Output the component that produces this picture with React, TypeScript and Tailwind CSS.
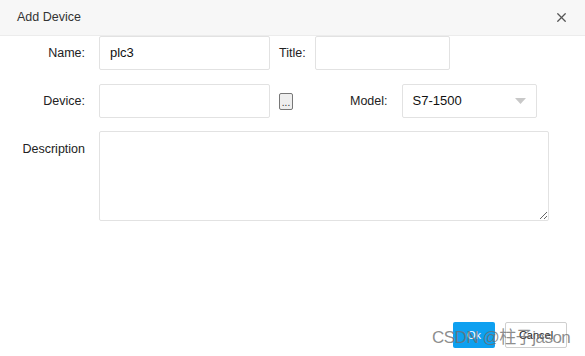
import { X } from 'lucide-react';

const font = { fontFamily: '"Liberation Sans", "Noto Sans CJK SC", Arial, sans-serif' };

function Field({ width, value }: { width: string; value?: string }) {
  return (
    <div className={`${width} h-[34px] border border-[#e2e2e2] rounded-[2px] bg-white flex items-center px-[10px] text-[13px] text-[#111]`}>
      {value}
    </div>
  );
}

export default function App() {
  return (
    <div className="relative w-[585px] h-[356px] bg-white flex flex-col text-[#222]" style={font}>
      {/* Header */}
      <div className="h-[36px] flex items-center justify-between pl-[17px] pr-[16px] bg-[#f7f7f7] border-b border-[#ececec]">
        <span className="text-[12.5px] text-[#333]">Add Device</span>
        <X size={15} strokeWidth={2} className="text-[#555]" />
      </div>

      {/* Name / Title */}
      <div className="flex items-center">
        <span className="w-[85px] text-right text-[12.5px]">Name:</span>
        <div className="ml-[14px]"><Field width="w-[171px]" value="plc3" /></div>
        <span className="ml-[9px] text-[12.5px]">Title:</span>
        <div className="ml-[9px]"><Field width="w-[135px]" /></div>
      </div>

      {/* Device / Model */}
      <div className="flex items-center mt-[14px]">
        <span className="w-[85px] text-right text-[12.5px]">Device:</span>
        <div className="ml-[14px]"><Field width="w-[171px]" /></div>
        <div className="ml-[9px] w-[14px] h-[17px] border border-[#777] rounded-[2px] bg-[#eeeeee] flex items-end justify-center text-[10px] leading-[12px] text-[#333]">...</div>
        <span className="ml-[57px] text-[12.5px]">Model:</span>
        <div className="ml-[14px] w-[135px] h-[34px] border border-[#e2e2e2] rounded-[2px] flex items-center justify-between pl-[10px] pr-[10px] text-[13px] text-[#111]">
          <span>S7-1500</span>
          <svg width="11" height="6" viewBox="0 0 11 6"><path d="M0 0h11L5.5 6z" fill="#c8c8c8" /></svg>
        </div>
      </div>

      {/* Description */}
      <div className="flex items-start mt-[13px]">
        <span className="w-[85px] text-right text-[12.5px] pt-[9px]">Description</span>
        <textarea className="ml-[14px] w-[450px] h-[90px] border border-[#e2e2e2] rounded-[2px] outline-none resize" />
      </div>

      {/* Footer */}
      <div className="flex-1" />
      <div className="flex justify-end items-center gap-[10px] pr-[18px] pb-[8px]">
        <button className="w-[42px] h-[26px] bg-[#0ea0f0] text-white text-[11px] rounded-[2px]">Ok</button>
        <button className="w-[62px] h-[26px] bg-white border border-[#cfcfcf] text-[#222] text-[11px] rounded-[2px]">Cancel</button>
      </div>

      {/* watermark */}
      <span className="absolute left-[432px] top-[325px] text-[17px] tracking-[-0.5px] text-[#6f6f6f]/80 pointer-events-none whitespace-nowrap">CSDN @柱子jason</span>
    </div>
  );
}
